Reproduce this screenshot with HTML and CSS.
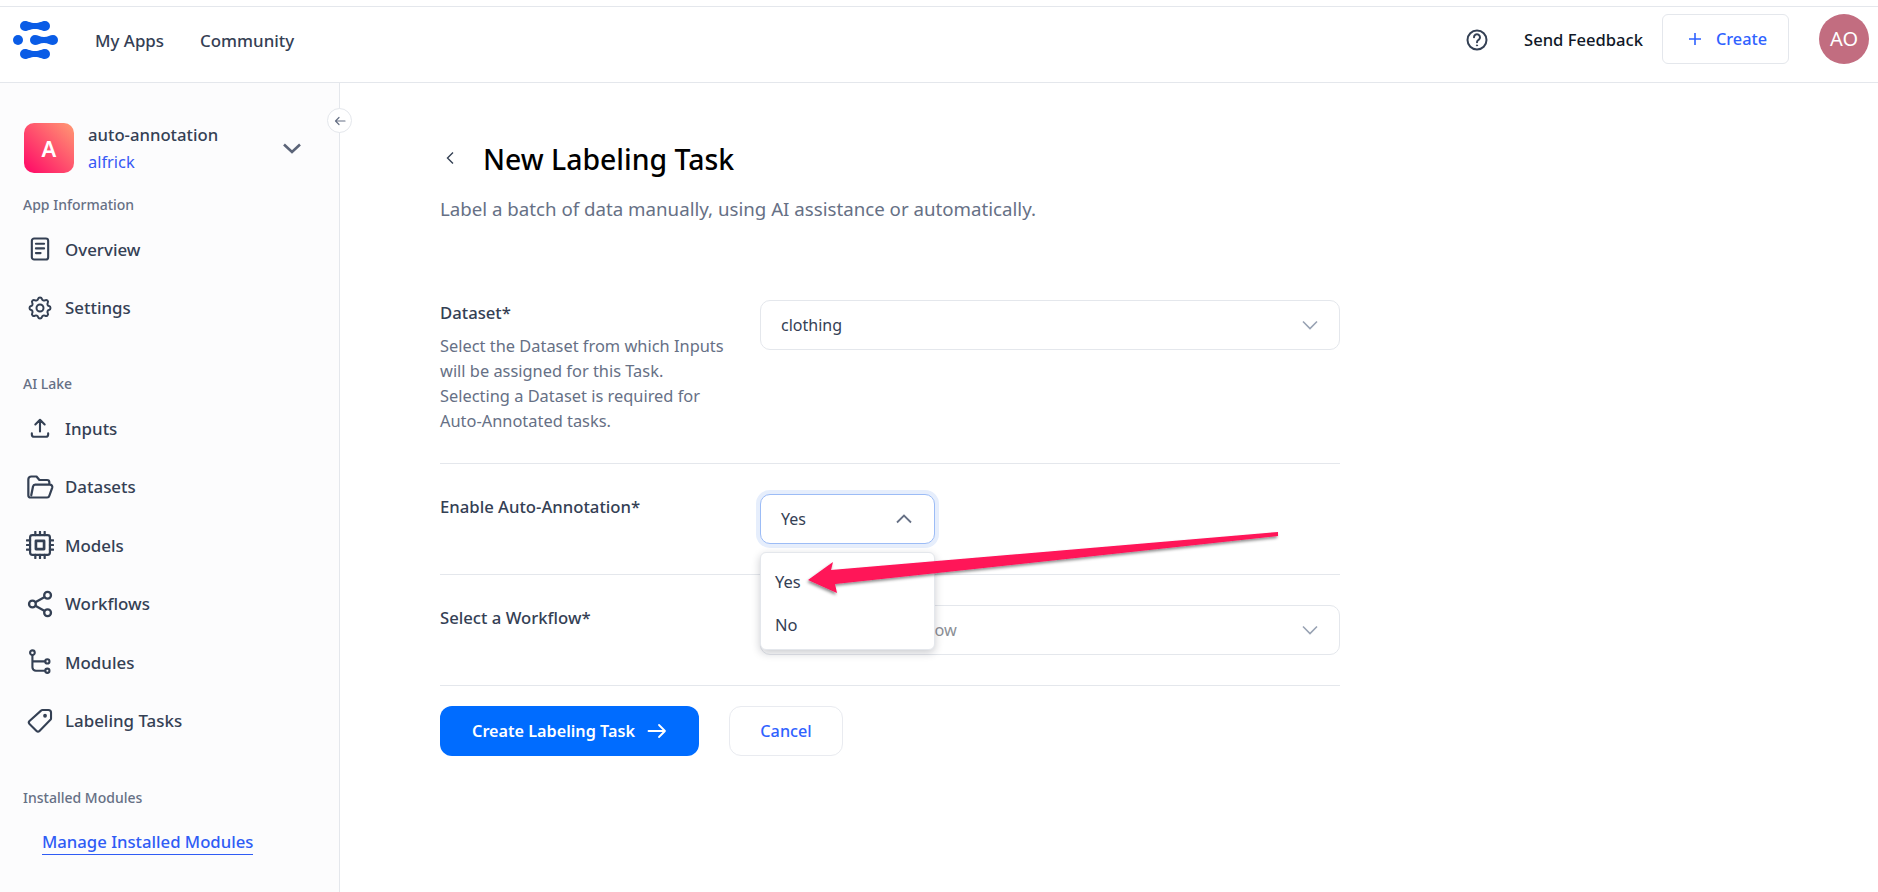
FILE: index.html
```html
<!DOCTYPE html>
<html lang="en">
<head>
<meta charset="utf-8">
<title>New Labeling Task</title>
<link rel="stylesheet" href="styles.css">
</head>
<body>
<div class="topstrip"></div>
<header class="topbar">
  <svg class="logo" viewBox="0 0 46 38" width="46" height="38" fill="#0a5ce6">
    <path d="M12 0C15 0 17 2 22 2C27 2 29 0 32 0A5 5 0 0 1 32 10C29 10 27 8 22 8C17 8 15 10 12 10A5 5 0 0 1 12 0Z"/>
    <circle cx="5" cy="19" r="5"/>
    <path d="M22 14C25 14 27 16 31 16C35 16 37 14 40 14A5 5 0 0 1 40 24C37 24 35 22 31 22C27 22 25 24 22 24A5 5 0 0 1 22 14Z"/>
    <path d="M12 28C15 28 17 30 22 30C27 30 29 28 32 28A5 5 0 0 1 32 38C29 38 27 36 22 36C17 36 15 38 12 38A5 5 0 0 1 12 28Z"/>
  </svg>
  <nav class="topnav"><a>My Apps</a><a>Community</a></nav>
  <div class="topright">
    <svg class="help" viewBox="0 0 24 24" width="24" height="24" fill="none" stroke="#344054" stroke-width="2" stroke-linecap="round"><circle cx="12" cy="12" r="9.5"/><path d="M9 9.3a3 3 0 1 1 4.6 2.5c-1 .7-1.6 1.2-1.6 2.4"/><circle cx="12" cy="17.4" r=".6" fill="#344054" stroke-width="1"/></svg>
    <span class="feedback">Send Feedback</span>
    <button class="create"><svg viewBox="0 0 14 14" width="14" height="14" fill="none" stroke="#2f62ff" stroke-width="1.6"><path d="M7 1V13M1 7H13"/></svg><span>Create</span></button>
    <div class="avatar">AO</div>
  </div>
</header>
<div class="body">
  <aside class="sidebar">
    <div class="collapse"><svg viewBox="0 0 12 12" width="12" height="12" fill="none" stroke="#667085" stroke-width="1.2" stroke-linecap="round" stroke-linejoin="round"><path d="M11 6H1.5M5 2.5L1.5 6L5 9.5"/></svg></div>
    <div class="workspace">
      <div class="tile">A</div>
      <div class="wsnames"><div class="wsname">auto-annotation</div><div class="wsowner">alfrick</div></div>
      <svg class="wschev" viewBox="0 0 18 11" width="18" height="11" fill="none" stroke="#5b6478" stroke-width="2.6"><path d="M1 1.5L9 9L17 1.5"/></svg>
    </div>
    <div class="sectitle first">App Information</div>
    <a class="item"><svg viewBox="0 0 24 24" fill="none" stroke="#344054" stroke-width="1.8" stroke-linecap="round" stroke-linejoin="round"><rect x="5" y="3" width="14" height="18" rx="2"/><path d="M8.500 7.500H15.500M8.500 11.500H15.500M8.500 15.500H12.500"/></svg><span>Overview</span></a>
    <a class="item"><svg viewBox="0 0 24 24" fill="none" stroke="#344054" stroke-width="1.7" stroke-linecap="round" stroke-linejoin="round"><path d="M10.325 4.317c.426-1.756 2.924-1.756 3.35 0a1.724 1.724 0 002.573 1.066c1.543-.94 3.31.826 2.37 2.37a1.724 1.724 0 001.065 2.572c1.756.426 1.756 2.924 0 3.35a1.724 1.724 0 00-1.066 2.573c.94 1.543-.826 3.31-2.37 2.37a1.724 1.724 0 00-2.572 1.065c-.426 1.756-2.924 1.756-3.35 0a1.724 1.724 0 00-2.573-1.066c-1.543.94-3.31-.826-2.37-2.37a1.724 1.724 0 00-1.065-2.572c-1.756-.426-1.756-2.924 0-3.35a1.724 1.724 0 001.066-2.573c-.94-1.543.826-3.31 2.37-2.37.996.608 2.296.07 2.572-1.065z"/><circle cx="12" cy="12" r="3"/></svg><span>Settings</span></a>
    <div class="sectitle second">AI Lake</div>
    <a class="item"><svg viewBox="0 0 24 24" fill="none" stroke="#344054" stroke-width="1.8" stroke-linecap="round" stroke-linejoin="round"><path d="M12 15V5.500M8 9L12 5L16 9M5 16.500V17.500a2 2 0 0 0 2 2H17a2 2 0 0 0 2-2V16.500"/></svg><span>Inputs</span></a>
    <a class="item"><svg viewBox="0 0 24 24" fill="none" stroke="#344054" stroke-width="1.900" stroke-linecap="round" stroke-linejoin="round"><path d="M2 19V5.500A2.500 2.500 0 0 1 4.500 3H9l2.500 3H18a2 2 0 0 1 2 2v2M2 19a2 2 0 0 0 2 2H18a2 2 0 0 0 2-1.500L22.500 12.500a2 2 0 0 0-2-2.500H8a2 2 0 0 0-2 1.500L4.500 19"/></svg><span>Datasets</span></a>
    <a class="item"><svg viewBox="0 0 24 24" fill="none" stroke="#344054" stroke-width="1.900" stroke-linecap="round" stroke-linejoin="round"><rect x="3.500" y="3.500" width="17" height="17" rx="2"/><rect x="8.500" y="8.500" width="7" height="7" stroke-width="2.300"/><path d="M8 3.500V0.700M12 3.500V0.700M16 3.500V0.700M8 23.300V20.500M12 23.300V20.500M16 23.300V20.500M0.700 8H3.500M0.700 12H3.500M0.700 16H3.500M20.500 8H23.300M20.500 12H23.300M20.500 16H23.300"/></svg><span>Models</span></a>
    <a class="item"><svg viewBox="0 0 24 24" fill="none" stroke="#344054" stroke-width="2"><circle cx="18.500" cy="4.500" r="2.900"/><circle cx="5.500" cy="12" r="2.900"/><circle cx="18.500" cy="19.500" r="2.900"/><path d="M8 10.500L16 6M8 13.500L16 18"/></svg><span>Workflows</span></a>
    <a class="item"><svg viewBox="0 0 24 24" fill="none" stroke="#344054" stroke-width="1.800" stroke-linecap="round"><circle cx="5.500" cy="4" r="2"/><circle cx="18.300" cy="11.500" r="1.800"/><circle cx="18.300" cy="19.500" r="1.800"/><path d="M5.500 6V16.500a3 3 0 0 0 3 3H16.500M5.500 11.500H16.500"/></svg><span>Modules</span></a>
    <a class="item"><svg viewBox="0 0 24 24" fill="none" stroke="#344054" stroke-width="2" stroke-linejoin="round"><g transform="translate(1.200 1.200) scale(.9)"><path d="M14.500 1.500H20a2.500 2.500 0 0 1 2.500 2.500V9.500a2 2 0 0 1-.6 1.400L11.500 21.500a2 2 0 0 1-2.800 0L2 14.800a2 2 0 0 1 0-2.800L13 2.100a2 2 0 0 1 1.500-.6Z"/><circle cx="16.800" cy="7" r=".8" fill="#344054"/></g></svg><span>Labeling Tasks</span></a>
    <div class="sectitle third">Installed Modules</div>
    <a class="manage">Manage Installed Modules</a>
  </aside>
  <main class="main">
    <div class="titlerow">
      <svg class="back" viewBox="0 0 8 14" width="8" height="14" fill="none" stroke="#344054" stroke-width="1.400"><path d="M7 1.500L1.500 7L7 12.500"/></svg>
      <h1>New Labeling Task</h1>
    </div>
    <p class="subtitle">Label a batch of data manually, using AI assistance or automatically.</p>
    <form class="form">
      <div class="row first">
        <div class="labelcol">
          <div class="label">Dataset*</div>
          <div class="desc">Select the Dataset from which Inputs<br>will be assigned for this Task.<br>Selecting a Dataset is required for<br>Auto-Annotated tasks.</div>
        </div>
        <div class="select"><span>clothing</span><svg viewBox="0 0 16 10" width="16" height="10" fill="none" stroke="#98a2b3" stroke-width="1.600"><path d="M1 1.500L8 8.500L15 1.500"/></svg></div>
      </div>
      <div class="row">
        <div class="label">Enable Auto-Annotation*</div>
        <div class="dropwrap">
          <div class="select open"><span>Yes</span><svg viewBox="0 0 16 10" width="16" height="10" fill="none" stroke="#667085" stroke-width="1.800"><path d="M1 8.500L8 1.500L15 8.500"/></svg></div>
          <div class="menu"><div class="opt">Yes</div><div class="opt">No</div></div>
        </div>
      </div>
      <div class="row">
        <div class="label">Select a Workflow*</div>
        <div class="select placeholder"><span>Select or add Workflow</span><svg viewBox="0 0 16 10" width="16" height="10" fill="none" stroke="#98a2b3" stroke-width="1.600"><path d="M1 1.500L8 8.500L15 1.500"/></svg></div>
      </div>
      <div class="actions">
        <button type="button" class="primary"><span>Create Labeling Task</span><svg viewBox="0 0 20 16" width="20" height="16" fill="none" stroke="#fff" stroke-width="1.800" stroke-linecap="round" stroke-linejoin="round"><path d="M1.500 8H18M12 2L18 8L12 14"/></svg></button>
        <button type="button" class="cancel">Cancel</button>
      </div>
    </form>
  </main>
</div>
<svg class="annot" viewBox="0 0 1878 892" width="1878" height="892">
  <defs><filter id="sh" x="-5%" y="-20%" width="110%" height="150%"><feDropShadow dx="-1" dy="2" stdDeviation="1.500" flood-color="#000" flood-opacity=".45"/></filter></defs>
  <path filter="url(#sh)" fill="#ff1259" d="M1278 532L1278 536L835 584L837 593L808 580L833 562L831 570Z"/>
</svg>
</body>
</html>
```
FILE: styles.css
```css
* { box-sizing: border-box; }
html, body { margin: 0; height: 892px; overflow: hidden; background: #fff; }
body { font-family: "Noto Sans", "Open Sans", sans-serif; font-size: 16px; color: #344054; position: relative; }
button { font-family: inherit; cursor: pointer; }

.topstrip { height: 7px; border-bottom: 1px solid #e4e7ec; }
.topbar { height: 76px; border-bottom: 1px solid #e4e7ec; display: flex; align-items: center; padding: 0 9px 10px 13px; }
.logo { flex: none; }
.topnav { display: flex; gap: 36px; margin-left: 36px; font-weight: 500; font-size: 16.9px; padding-top: 1px; }
.topright { margin-left: auto; display: flex; align-items: center; }
.help { margin-right: 35px; }
.feedback { color: #101828; font-weight: 500; font-size: 16.6px; margin-right: 19px; }
.create { width: 127px; height: 50px; margin-top: -2px; padding: 0 0 0 4px; background: #fff; border: 1px solid #e4e7ec; border-radius: 6px; color: #2f62ff; font-size: 16.3px; font-weight: 500; display: flex; align-items: center; justify-content: center; gap: 14px; }
.avatar { width: 50px; height: 50px; margin: -2px 0 0 30px; border-radius: 50%; background: #c26d80; color: #fff; font-size: 20px; display: flex; align-items: center; justify-content: center; }

.body { display: flex; height: 809px; }
.sidebar { width: 340px; flex: none; background: #fcfcfd; border-right: 1px solid #e4e7ec; position: relative; padding: 40px 0 0 23px; }
.collapse { position: absolute; right: -13px; top: 25px; width: 25px; height: 25px; border: 1px solid #e4e7ec; border-radius: 50%; background: #fff; display: flex; align-items: center; justify-content: center; }
.workspace { display: flex; align-items: center; padding-left: 1px; height: 50px; }
.tile { width: 50px; height: 50px; border-radius: 10px; background: linear-gradient(45deg, #ff1468 10%, #ff9a73 100%); color: #fff; font-size: 22px; font-weight: 600; display: flex; align-items: center; justify-content: center; }
.wsnames { margin-left: 14px; width: 195px; }
.wsname { font-size: 16.7px; font-weight: 500; line-height: 24px; margin-top: 1px; }
.wsowner { font-size: 16.4px; line-height: 24px; color: #3658f5; margin-top: 3px; }
.wschev { flex: none; }
.sectitle { font-size: 14px; font-weight: 500; color: #667085; line-height: 20px; }
.sectitle.first { margin-top: 22px; }
.sectitle.second { margin-top: 37px; }
.sectitle.third { margin-top: 38px; }
.item { display: flex; align-items: center; gap: 11.5px; height: 58.5px; padding-left: 2.5px; font-size: 16.9px; font-weight: 500; }
.sectitle.first + .item { margin-top: 5px; }
.sectitle.second + .item { margin-top: 5px; }
.item svg { flex: none; width: 28px; height: 28px; }
.manage { display: inline-block; margin: 22px 0 0 19px; font-size: 16.7px; font-weight: 500; line-height: 24px; color: #2f5cf5; border-bottom: 1px solid #2f5cf5; }

.main { flex: 1; padding: 56px 0 0 100px; }
.titlerow { display: flex; align-items: center; height: 40px; }
.back { flex: none; margin-left: 6px; margin-top: -2px; }
h1 { margin: 0 0 0 29px; font-size: 28.4px; font-weight: 500; color: #000; line-height: 40px; }
.subtitle { margin: 16px 0 0; font-size: 18.7px; line-height: 28px; color: #667085; }
.form { width: 900px; margin-top: 47px; }
.row { display: grid; grid-template-columns: 320px 1fr; padding: 30px 0; border-bottom: 1px solid #e4e7ec; align-items: start; }
.row.first { padding: 30px 0 30px; }
.label { font-size: 16.7px; font-weight: 500; line-height: 24px; margin-top: 1px; color: #344054; }
.desc { margin-top: 8px; font-size: 16.4px; line-height: 25px; color: #667085; }
.select { height: 50px; border: 1px solid #e4e7ec; border-radius: 10px; display: flex; align-items: center; justify-content: space-between; padding: 0 21px 0 20px; background: #fff; font-size: 16px; color: #344054; }
.select.placeholder { color: #8c8f96; font-size: 16.3px; }
.select.open { width: 175px; border-color: #9cbcf6; box-shadow: 0 0 0 4px #e6eefc; padding-right: 22px; }
.dropwrap { position: relative; }
.menu { position: absolute; left: 0; top: 58px; width: 175px; height: 98px; background: #fff; border: 1px solid #e4e7ec; border-radius: 6px; box-shadow: 0 3px 8px rgba(16, 24, 40, .22); padding-top: 7px; z-index: 2; }
.opt { height: 43px; display: flex; align-items: center; padding-left: 14px; font-size: 16.5px; color: #344054; }
.actions { display: flex; gap: 30px; margin-top: 20px; }
.primary { width: 259px; height: 50px; border: 0; border-radius: 12px; background: #006cff; color: #fff; font-size: 16.2px; font-weight: 600; display: flex; align-items: center; justify-content: center; gap: 12px; }
.cancel { width: 114px; height: 50px; border: 1px solid #e9ebf0; border-radius: 12px; background: #fff; color: #2f62ff; font-size: 16.2px; font-weight: 500; }

.annot { position: absolute; left: 0; top: 0; z-index: 5; pointer-events: none; }
```
